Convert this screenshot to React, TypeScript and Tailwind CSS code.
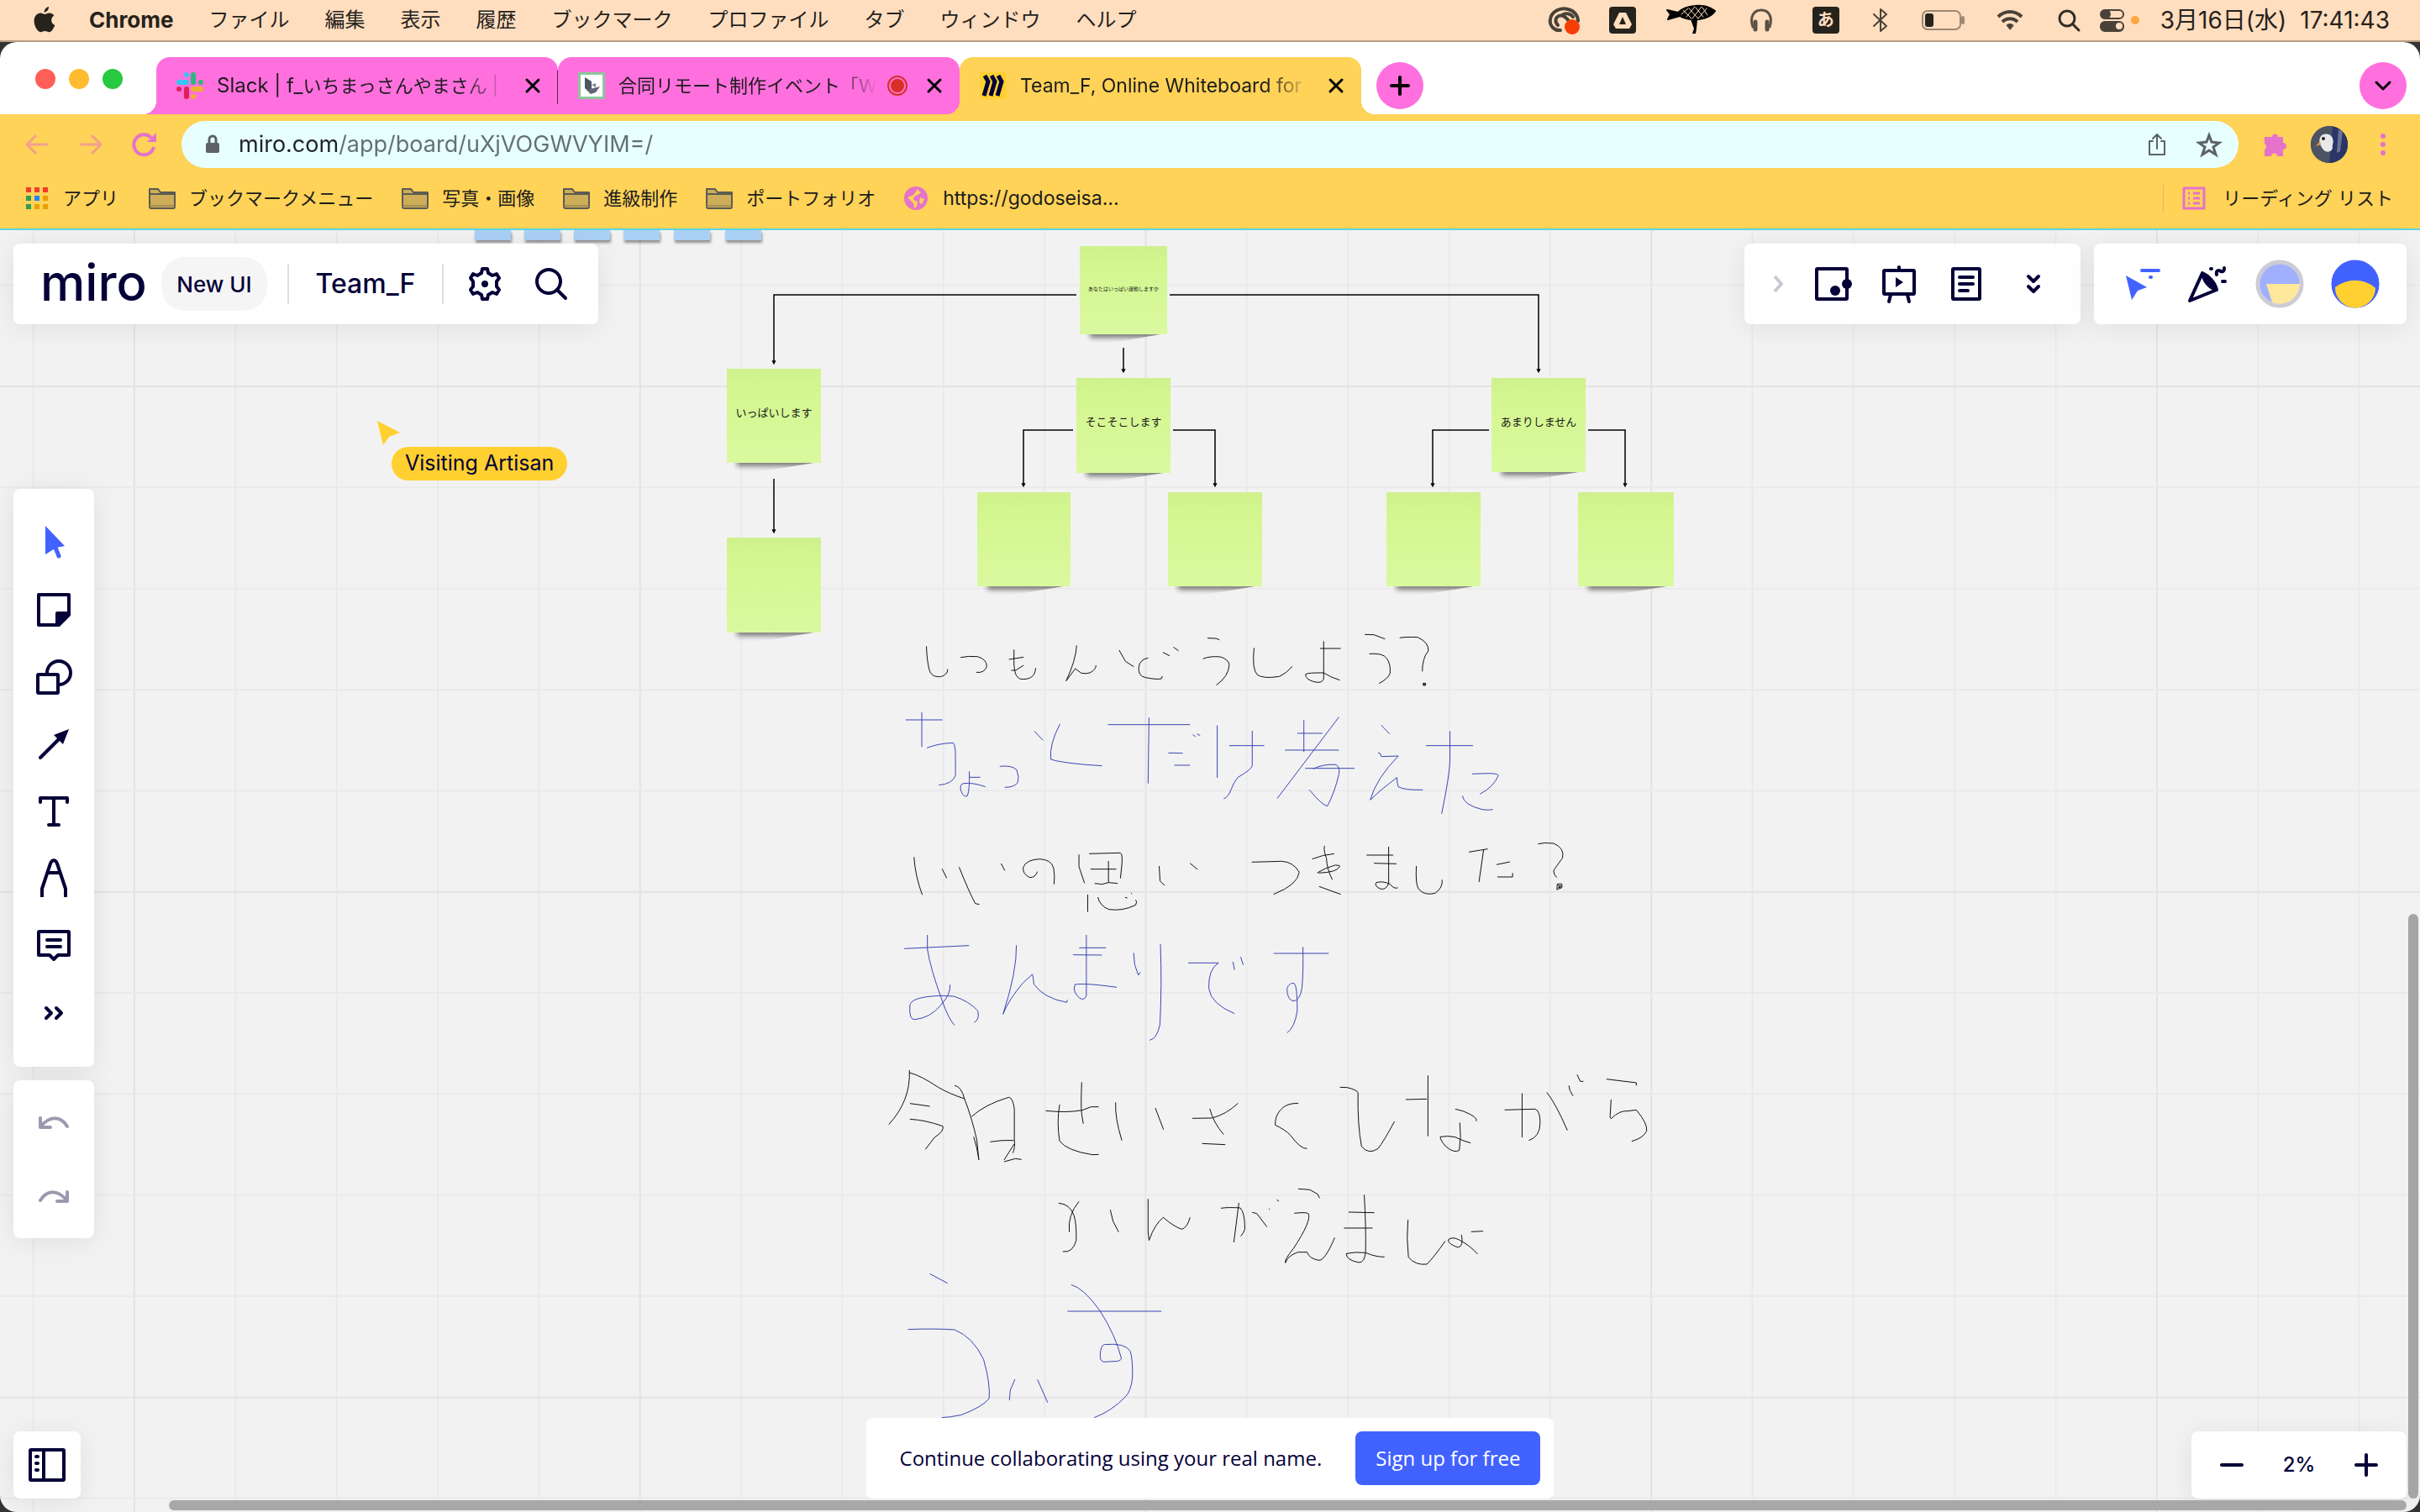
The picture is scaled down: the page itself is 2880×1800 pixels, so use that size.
import React from "react";

const NAVY = "#050038";

/* ---------- shared pieces ---------- */

type BtnProps = {
  label: string;
  className?: string;
  children: React.ReactNode;
};

function IconButton({ label, className = "", children }: BtnProps) {
  return (
    <button type="button" aria-label={label} className={`flex shrink-0 items-center justify-center ${className}`}>
      {children}
    </button>
  );
}

type SvgProps = {
  w: number;
  h: number;
  children: React.ReactNode;
  color?: string;
  sw?: number;
};

function Draw({ w, h, children, color = NAVY, sw = 4 }: SvgProps) {
  return (
    <svg
      width={w}
      height={h}
      viewBox={`0 0 ${w} ${h}`}
      fill="none"
      stroke={color}
      strokeWidth={sw}
      strokeLinecap="round"
      strokeLinejoin="round"
      aria-hidden="true"
      className="shrink-0 overflow-visible"
    >
      {children}
    </svg>
  );
}

/* ---------- macOS menu bar ---------- */

const menus = ["ファイル", "編集", "表示", "履歴", "ブックマーク", "プロファイル", "タブ", "ウィンドウ", "ヘルプ"];

function MenuBar() {
  return (
    <header className="flex h-[50px] shrink-0 items-center justify-between border-b-2 border-[#b99c83] bg-[#ffdebf] pr-9 pl-10 text-[#26221c]">
      <nav aria-label="メニューバー" className="flex items-center text-2xl">
        <IconButton label="Apple" className="mr-10">
          <Draw w={26} h={32} color="none">
            <path
              fill="#26221c"
              d="M18 0c.3 3-2.400 6.600-5.300 6.700C12.300 3.800 15 .6 18 0zM13.300 9c1.300 0 3-1.500 5.800-1.400 1.600.1 3.800.9 5.200 2.900-4.600 3-3.900 9.300 1 11.400-1 2.900-3.700 8.200-6.800 8.300-2 0-2.800-1.200-5.100-1.200s-3.200 1.200-5 1.200C4.700 30.200.6 22.900.6 17c0-6 3.800-9.300 7.600-9.400 2.200 0 3.900 1.400 5.100 1.400z"
            />
          </Draw>
        </IconButton>
        <button type="button" className="mr-[42px] text-[26px] font-bold">
          Chrome
        </button>
        <div className="flex gap-[42px]">
          {menus.map((m) => (
            <button key={m} type="button" className="whitespace-nowrap">
              {m}
            </button>
          ))}
        </div>
      </nav>

      <div className="flex items-center">
        <IconButton label="Creative Cloud" className="mr-8 w-11">
          <Draw w={42} h={34} color="#4a4238" sw={4}>
            <path d="M17 29a11 11 0 0 1-12-13C6 7 17 1 26 4c8 2 12 8 12 14" />
            <path d="M14 23c-4-4-3-9 1-11 5-2 9 2 12 6M19 11c4-3 10-2 13 2" />
            <circle cx="31" cy="25" r="9" fill="#f73d06" stroke="none" />
          </Draw>
        </IconButton>
        <IconButton label="Drive" className="mr-9 h-8 w-8 rounded-sm bg-[#26221c]">
          <Draw w={24} h={24} color="none">
            <path d="M8 3h8l7 14-3 5H4l-3-5z" fill="#ffdebf" />
            <path d="M12 8l4 9H8z" fill="#26221c" />
          </Draw>
        </IconButton>
        <IconButton label="Fish" className="mr-10 w-[60px]">
          <Draw w={60} h={34} color="#000000" sw={2}>
            <path d="M14 8C22-1 46-4 58 6 52 16 30 20 16 12L2 16l3-6-4-5z" fill="#000000" />
            <path
              d="M18 10l8-7M24 13l10-12M31 15L42 1M38 15L48 3M20 5l10 10M27 3l11 12M35 2l9 11M43 2l6 9"
              stroke="#ffdebf"
              strokeWidth="1"
            />
            <path d="M29 16h8l-1 11-1 6h-4l2-6z" fill="#000000" stroke="none" />
          </Draw>
        </IconButton>
        <IconButton label="Headphones" className="mr-12">
          <Draw w={26} h={28} color="#5a5045" sw={3}>
            <path d="M3 22C-1 10 4 2 13 2s14 8 10 20" />
            <path d="M6 16v9M20 16v9" strokeWidth="5" />
          </Draw>
        </IconButton>
        <IconButton label="入力ソース" className="mr-10 h-8 w-8 rounded-sm bg-[#26221c] text-xl leading-8 font-bold text-[#ffdebf]">
          あ
        </IconButton>
        <IconButton label="Bluetooth" className="mr-10">
          <Draw w={18} h={28} color="#4a4238" sw={2}>
            <path d="M1 7l15 14-7 6V1l7 6L1 21" />
          </Draw>
        </IconButton>
        <IconButton label="バッテリー" className="mr-9">
          <Draw w={52} h={24} color="#9c8874" sw={2}>
            <rect x="1" y="1" width="45" height="22" rx="6" />
            <rect x="4" y="4" width="10" height="16" rx="3" fill="#26221c" stroke="none" />
            <path d="M49 9v6" strokeWidth="4" />
          </Draw>
        </IconButton>
        <IconButton label="Wi-Fi" className="mr-10">
          <Draw w={34} h={26} color="#4a4238" sw={4}>
            <path d="M3 9c8-8 20-8 28 0M8 15c5-5 13-5 18 0" strokeLinecap="butt" />
            <path d="M17 24l-4-5c2-2 6-2 8 0z" fill="#4a4238" strokeWidth="1" />
          </Draw>
        </IconButton>
        <IconButton label="検索" className="mr-6">
          <Draw w={26} h={26} color="#332d26" sw={3}>
            <circle cx="11" cy="11" r="9" />
            <path d="M18 18l7 7" />
          </Draw>
        </IconButton>
        <IconButton label="コントロールセンター" className="mr-7">
          <Draw w={44} h={28} color="#4a4238" sw={2}>
            <rect x="1" y="2" width="27" height="10" rx="5" />
            <circle cx="7" cy="7" r="5" fill="#4a4238" />
            <rect x="1" y="16" width="27" height="11" rx="5" fill="#4a4238" />
            <circle cx="23" cy="21" r="4" fill="#ffdebf" stroke="none" />
            <circle cx="42" cy="14" r="5" fill="#ffa640" stroke="none" />
          </Draw>
        </IconButton>
        <time className="flex gap-4 text-[28px] whitespace-nowrap">
          <span>3月16日(水)</span>
          <span>17:41:43</span>
        </time>
      </div>
    </header>
  );
}

/* ---------- browser chrome ---------- */

function SlackIcon() {
  return (
    <Draw w={32} h={32} color="none">
      <rect x="9" y="0" width="6" height="6" rx="3" fill="#36c5f0" />
      <rect x="0" y="9" width="15" height="6" rx="3" fill="#36c5f0" />
      <rect x="17" y="0" width="6" height="15" rx="3" fill="#2eb67d" />
      <rect x="26" y="9" width="6" height="6" rx="3" fill="#2eb67d" />
      <rect x="17" y="17" width="15" height="6" rx="3" fill="#ecb22e" />
      <rect x="17" y="26" width="6" height="6" rx="3" fill="#ecb22e" />
      <rect x="0" y="17" width="6" height="6" rx="3" fill="#e01e5a" />
      <rect x="9" y="17" width="6" height="15" rx="3" fill="#e01e5a" />
    </Draw>
  );
}

function EventIcon() {
  return (
    <Draw w={32} h={32} color="none">
      <rect width="32" height="32" fill="#8cc79a" />
      <rect x="3" y="3" width="26" height="26" fill="#ffffff" />
      <path d="M8 6l8 5v9l-3 3-5-4z" fill="#4c5661" />
      <path d="M16 15l5-2v5z" fill="#7b858f" />
      <path d="M10 21l16-4-5 7-6 2z" fill="#5d6771" />
    </Draw>
  );
}

function MiroIcon() {
  return (
    <Draw w={32} h={32} color={NAVY} sw={5}>
      <rect width="32" height="32" rx="4" fill="#ffd02f" stroke="none" />
      <path d="M6 4l4 7-5 17M14 4l4 7-5 17M22 4l4 7-5 17" strokeLinecap="butt" strokeLinejoin="miter" />
    </Draw>
  );
}

type TabProps = {
  title: React.ReactNode;
  icon: React.ReactNode;
  className: string;
  recording?: boolean;
};

function Tab({ title, icon, className, recording }: TabProps) {
  return (
    <div className={`relative flex h-[68px] w-[478px] items-center rounded-t-2xl pr-[14px] pl-6 text-[22px] ${className}`}>
      {icon}
      <button
        type="button"
        role="tab"
        className="ml-4 min-w-0 flex-1 overflow-hidden text-left whitespace-nowrap [mask-image:linear-gradient(90deg,#000_85%,transparent)]"
      >
        {title}
      </button>
      {recording && (
        <span className="ml-3 flex">
          <Draw w={24} h={24} color="#d93025" sw={2}>
            <circle cx="12" cy="12" r="11" />
            <circle cx="12" cy="12" r="7" fill="#d93025" />
          </Draw>
        </span>
      )}
      <IconButton label="タブを閉じる" className="ml-4 h-8 w-8">
        <Draw w={16} h={16} color="#000000" sw={3}>
          <path d="M1 1l14 14M15 1L1 15" />
        </Draw>
      </IconButton>
    </div>
  );
}

function TabStrip() {
  return (
    <div className="flex h-[86px] items-end justify-between bg-white">
      <div className="flex items-end">
        <div className="flex h-[84px] w-[186px] items-center gap-4 pl-[42px]">
          <button type="button" aria-label="閉じる" className="h-6 w-6 rounded-full bg-[#ff5f57]" />
          <button type="button" aria-label="しまう" className="h-6 w-6 rounded-full bg-[#febc2e]" />
          <button type="button" aria-label="拡大" className="h-6 w-6 rounded-full bg-[#28c840]" />
        </div>
        <div role="tablist" className="flex">
          <Tab
            title={
              <>
                <span className="text-2xl">Slack | f_</span>いちまっさんやまさん |
              </>
            }
            icon={<SlackIcon />}
            className="bg-[#ff70de] before:absolute before:right-full before:bottom-0 before:h-4 before:w-4 before:bg-[radial-gradient(circle_at_0_0,transparent_16px,#ff70de_16px)] after:absolute after:right-0 after:bottom-3 after:h-10 after:w-px after:bg-[#5a2a50]"
          />
          <Tab title="合同リモート制作イベント「W" icon={<EventIcon />} className="bg-[#ff70de]" recording />
          <Tab
            title={<span className="text-[23px]">Team_F, Online Whiteboard for</span>}
            icon={<MiroIcon />}
            className="bg-[#ffd258] before:absolute before:right-full before:bottom-0 before:h-4 before:w-4 before:bg-[radial-gradient(circle_at_0_0,transparent_16px,#ffd258_16px)] after:absolute after:bottom-0 after:left-full after:h-4 after:w-4 after:bg-[radial-gradient(circle_at_100%_0,transparent_16px,#ffd258_16px)]"
          />
        </div>
        <IconButton label="新しいタブ" className="mb-[6px] ml-[18px] h-14 w-14 rounded-full bg-[#ff70de]">
          <Draw w={24} h={24} color="#000000" sw={4}>
            <path d="M12 2v20M2 12h20" />
          </Draw>
        </IconButton>
      </div>
      <IconButton label="タブを検索" className="mr-4 mb-[6px] h-14 w-14 rounded-full bg-[#ff70de]">
        <Draw w={18} h={10} color="#000000" sw={3}>
          <path d="M1 1l8 8 8-8" />
        </Draw>
      </IconButton>
    </div>
  );
}

function Toolbar() {
  return (
    <div className="flex h-[72px] items-center pr-[26px] pl-[30px]">
      <IconButton label="戻る" className="mr-9">
        <Draw w={28} h={26} color="#f2a08c" sw={3}>
          <path d="M27 13H2M13 2L2 13l11 11" strokeLinecap="butt" />
        </Draw>
      </IconButton>
      <IconButton label="進む" className="mr-9">
        <Draw w={28} h={26} color="#f2a08c" sw={3}>
          <path d="M1 13h25M15 2l11 11-11 11" strokeLinecap="butt" />
        </Draw>
      </IconButton>
      <IconButton label="再読み込み">
        <Draw w={28} h={28} color="#e572cb" sw={4}>
          <path d="M25 17A12 12 0 1 1 22 6" strokeLinecap="butt" />
          <path d="M28 0v11H17z" fill="#e572cb" stroke="none" />
        </Draw>
      </IconButton>
      <div className="ml-[30px] flex h-14 min-w-0 flex-1 items-center rounded-full bg-[#e7ffff] pr-5 pl-7">
        <Draw w={18} h={22} color="#5c6366" sw={3}>
          <rect x="1" y="9" width="16" height="12" rx="2" fill="#5c6366" stroke="none" />
          <path d="M5 10V5a4 4 0 0 1 8 0v5" />
        </Draw>
        <input
          aria-label="アドレス"
          defaultValue="miro.com/app/board/uXjVOGWVYIM=/"
          className="ml-[22px] min-w-0 flex-1 bg-[linear-gradient(90deg,#202124_120px,#646e71_120px)] bg-clip-text text-[27px] text-transparent outline-none"
        />
        <IconButton label="共有" className="mr-9">
          <Draw w={22} h={28} color="#5c6366" sw={2}>
            <path d="M6 10H2v16h18V10h-4M11 19V2M6 7l5-5 5 5" />
          </Draw>
        </IconButton>
        <IconButton label="ブックマークに追加">
          <Draw w={30} h={28} color="#5c6366" sw={3}>
            <path d="M15 3l3 8 9 1-7 5 3 9-8-5-8 5 3-9-7-5 9-1z" strokeLinejoin="miter" />
          </Draw>
        </IconButton>
      </div>
      <IconButton label="拡張機能" className="ml-[30px]">
        <Draw w={28} h={28} color="none">
          <path
            d="M10 5a3.500 3.500 0 0 1 7 0h6v7a4 4 0 0 1 0 8v8h-7a3.500 3.500 0 0 0-7 0H1v-8a4 4 0 0 0 0-7V5z"
            fill="#e572cb"
          />
        </Draw>
      </IconButton>
      <IconButton label="プロフィール" className="ml-7 h-11 w-11 overflow-hidden rounded-full bg-[#3d4450]">
        <Draw w={44} h={44} color="none">
          <rect width="44" height="44" fill="#4c5463" />
          <path d="M26 0h18v44H22z" fill="#2c3468" />
          <path d="M33 4l5 2-3 24-4 2z" fill="#6b7394" />
          <path d="M11 14c2-6 13-6 15 1 2 5-1 7 0 11-1 6-9 6-12 1-2-4-5-7-3-13z" fill="#e8e8ea" />
          <path d="M11 18l-5 6 6-2z" fill="#e89a3c" />
          <circle cx="15" cy="15" r="2" fill="#222222" />
        </Draw>
      </IconButton>
      <IconButton label="メニュー" className="ml-6 w-9">
        <Draw w={6} h={26} color="none">
          <circle cx="3" cy="3" r="3" fill="#e572cb" />
          <circle cx="3" cy="13" r="3" fill="#e572cb" />
          <circle cx="3" cy="23" r="3" fill="#e572cb" />
        </Draw>
      </IconButton>
    </div>
  );
}

function FolderIcon() {
  return (
    <Draw w={32} h={26} color="#5c5a52" sw={2}>
      <path d="M1 23V2h10l3 4h17v17a2 2 0 0 1-2 2H3a2 2 0 0 1-2-2z" fill="#cdad58" />
      <path d="M1 8h30" />
      <path d="M2 22h28" stroke="#a58e50" />
    </Draw>
  );
}

function AppsIcon() {
  const colors = ["#f23b2f", "#f23b2f", "#f23b2f", "#2f9e51", "#2383f5", "#eb9f00", "#2f9e51", "#eb9f00", "#eb9f00"];
  return (
    <Draw w={26} h={26} color="none">
      {colors.map((c, i) => (
        <rect key={i} x={(i % 3) * 10} y={Math.floor(i / 3) * 10} width="6" height="6" fill={c} />
      ))}
    </Draw>
  );
}

function GlobeIcon() {
  return (
    <Draw w={28} h={28} color="none">
      <circle cx="14" cy="14" r="14" fill="#e572cb" />
      <path d="M16 3l4 5-8 4-1 4 5 2-1 6-3 2-1-6-7-7 7-3 3-4z" fill="#ffd258" />
      <path d="M19 13l5 2-3 6-3-2z" fill="#ffd258" />
    </Draw>
  );
}

function BookmarkBar() {
  const folders = ["ブックマークメニュー", "写真・画像", "進級制作", "ポートフォリオ"];
  return (
    <nav aria-label="ブックマーク" className="flex h-14 items-center pr-8 pl-[31px] text-[22px] whitespace-nowrap">
      <a href="#apps" className="mr-9 flex items-center gap-[18px]">
        <AppsIcon />
        アプリ
      </a>
      {folders.map((f) => (
        <a key={f} href="#folder" className="mr-[34px] flex items-center gap-4">
          <FolderIcon />
          {f}
        </a>
      ))}
      <a href="#site" className="flex items-center gap-[18px]">
        <GlobeIcon />
        <span className="text-[23px]">https://godoseisa...</span>
      </a>
      <a href="#reading-list" className="ml-auto flex items-center gap-5 border-l border-[#eeb06c] pl-[22px]">
        <Draw w={28} h={28} color="#e572cb" sw={3}>
          <rect x="2" y="2" width="24" height="24" />
          <path d="M7 8h2M13 8h8M7 14h2M13 14h8M7 20h2M13 20h8" strokeLinecap="butt" />
        </Draw>
        リーディング リスト
      </a>
    </nav>
  );
}

/* ---------- board drawing ---------- */

const STEP = 120.35;
const columns = Array.from({ length: 24 }, (_, i) => ({ pos: 39.6 + i * STEP, major: i % 5 === 1 }));
const rows = Array.from({ length: 13 }, (_, i) => ({ pos: 339.6 + i * STEP, major: i % 5 === 1 }));

const connectors = [
  "M1281 351H921V430",
  "M1392 351H1831V440",
  "M1337 414V440",
  "M921 570V631",
  "M1277 512H1218V576",
  "M1396 512H1446V576",
  "M1772 512H1705V576",
  "M1890 512H1934V576",
];

const BLUE = "#3a46b4";
const INK = "#111111";

/* Pen strokes, one sheet per part of the board. */
const sheets = [
  {
    transform: "translate(1040 740) scale(0.54845 0.33333)",
    strokes: [
      {
        color: INK,
        d: [
          "M114 88C115 130 118 165 122 180C128 200 145 200 152 192Q160 185 160 170",
          "M188 128Q205 122 225 125Q245 135 245 160Q240 185 222 181",
          "M304 100V150C305 180 308 200 318 205C335 208 350 200 351 166M293 135L325 127M298 174L308 174L325 156",
          "M440 85Q438 140 417 212L437 168L450 184Q462 188 470 182Q482 170 482 156",
          "M532 102L546 142L564 161M595 130Q578 135 575 160Q572 195 590 200Q615 208 624 204L626 195M627 110L642 122M650 91L661 104",
          "M724 59L742 60L750 65M714 133Q730 122 752 126Q770 135 771 155Q770 195 743 227",
          "M825 94Q820 170 832 190Q845 205 880 196Q895 185 908 160",
          "M976 70V205Q972 222 955 215Q935 205 937 188Q942 182 976 183Q992 200 1011 209M968 96H1013",
          "M1065 46L1085 47L1109 62M1075 115Q1105 112 1112 130Q1122 150 1120 185Q1115 205 1096 221",
          "M1141 58Q1155 54 1180 56Q1205 75 1203 105Q1190 130 1190 178M1192 220H1197V228H1192ZM1192 224H1197",
          "M87 841Q90 910 105 976M148 883L158 916M185 877Q205 960 220 1007L229 1010M276 864L284 889",
          "M355 893Q350 915 338 914Q322 900 324 878Q330 850 360 848Q385 850 390 880Q393 910 391 938",
          "M445 832V875L457 934M467 829L535 826Q540 830 538 870L535 917M509 855V932M470 884H526M479 935L495 938L509 932L529 935",
          "M464 975V1037M486 984Q490 1015 510 1028Q540 1035 568 1012Q572 1000 568 994M545 985L550 987M558 969L560 972",
          "M619 873L621 927L631 942M686 863L702 885",
          "M820 859L885 856Q910 858 923 895Q920 940 867 974",
          "M951 848Q975 832 999 829M978 801Q975 815 982 845Q983 885 995 922M962 897Q980 880 1000 870Q1015 870 1010 876Q1005 895 965 898M966 946L1013 974",
          "M1117 804V935Q1112 958 1100 955Q1085 945 1090 932Q1105 925 1120 938Q1128 955 1137 951M1069 834H1127M1085 863L1134 865",
          "M1177 873Q1175 940 1182 955Q1195 980 1218 970Q1235 950 1233 922",
          "M1291 823L1332 812M1323 815L1313 930M1351 868L1380 858M1353 912H1386V898",
          "M1441 794Q1455 788 1475 792Q1500 810 1494 845Q1478 880 1475 890Q1475 905 1482 914M1483 937H1493V950L1482 957ZM1484 942L1491 944L1485 950L1491 948",
        ],
      },
      {
        color: BLUE,
        d: [
          "M69 351H149M104 324V448M115 451Q140 435 172 433Q177 440 177 480V550Q170 580 141 584",
          "M207 535Q208 600 203 622Q195 630 189 605Q185 580 195 578Q215 574 242 590M208 556H231",
          "M273 517Q300 512 310 530Q316 555 312 575Q305 592 284 592",
          "M348 391L367 424M404 365Q380 440 384 492Q400 502 460 511L495 515",
          "M508 368H686M597 343L595 578M639 469L670 470M652 513H686M692 404L698 411M701 401L708 407",
          "M745 371V558M771 443H847M821 390V515Q818 530 790 556Q782 570 775 600Q768 630 759 632",
          "M933 352V466M919 399H973M892 459H1009M1009 341L875 632M936 524H1043M953 526Q975 508 1003 511Q1012 520 1009 545Q1000 610 984 659Q972 655 945 601",
          "M1101 370L1119 401M1094 469L1099 471L1101 482L1138 480Q1090 560 1077 637Q1100 600 1135 557Q1135 580 1138 590Q1150 602 1191 601",
          "M1198 443H1300M1250 391V500Q1248 560 1232 686M1298 544L1335 542Q1356 543 1355 550Q1345 590 1315 616M1277 622Q1280 655 1320 671Q1335 675 1343 671",
        ],
      },
    ],
  },
  {
    transform: "translate(1040 1080) scale(0.61224 0.33333)",
    strokes: [
      {
        color: BLUE,
        d: [
          "M59 148L185 137M104 99V150Q110 220 132 330Q145 400 157 422M148 277Q150 310 130 350Q110 395 80 401Q68 405 70 350Q72 320 130 316L155 318Q185 335 202 370Q206 400 195 412",
          "M277 136Q278 230 251 382Q262 330 290 270L308 240Q310 250 311 275Q330 325 375 340L376 331",
          "M413 99V315Q410 335 400 325Q385 300 391 276Q410 270 472 286M399 145H451M387 170L443 171",
          "M505 163L507 205L514 243L518 232M557 132Q560 280 556 420Q550 470 536 475",
          "M611 199H670Q650 220 651 290Q655 345 701 380M698 195L701 224M713 178L718 206",
          "M777 165H884M834 142Q835 230 832 290Q828 335 815 335Q803 330 803 290Q808 268 817 272Q823 280 823 370Q818 430 803 449",
        ],
      },
      {
        color: INK,
        d: [
          "M69 582Q72 690 29 776M69 591Q90 600 125 643Q145 665 176 684M70 701L109 711M70 757Q100 760 134 782Q137 800 118 822L100 865",
          "M157 637Q170 640 176 684Q190 750 200 830L204 902L200 860L194 820M190 748Q215 705 262 679Q270 680 273 720V830Q275 860 270 878M273 845L253 903M226 838L250 833H272M253 909L275 898L287 901",
          "M334 727Q375 735 405 725L422 713H437M404 625Q402 710 404 740L407 773M361 705Q355 770 361 835Q375 870 425 884L437 883",
          "M470 697Q468 750 482 833M547 717L563 794",
          "M619 754L657 753Q685 740 708 700M653 720Q660 770 680 812M638 844L683 848",
          "M825 700Q800 700 790 725Q780 745 780 778Q800 795 810 815Q830 865 842 862",
          "M906 643L920 644Q938 652 941 662Q940 780 948 855Q962 885 980 862Q990 840 1012 765",
          "M1034 687L1075 685M1077 601V818M1130 721L1145 728Q1175 750 1171 764M1139 769Q1142 820 1138 868Q1128 880 1112 855Q1100 830 1101 820Q1115 815 1130 821Q1145 835 1160 842",
          "M1226 724L1285 721Q1295 725 1295 770Q1295 820 1273 833M1260 665V822M1308 661Q1325 700 1348 797M1351 637L1353 655L1359 674M1367 598L1373 622L1379 622",
          "M1424 614L1482 627V637M1433 687L1431 750L1433 755Q1450 725 1465 728L1482 724Q1505 775 1502 800Q1495 825 1473 836",
        ],
      },
    ],
  },
  {
    transform: "translate(1040 1380) scale(0.54845 0.33333)",
    strokes: [
      {
        color: INK,
        d: [
          "M401 157Q425 160 434 200Q440 230 439 290Q432 335 410 330M445 151Q420 200 424 260M513 181L519 222L531 260",
          "M595 142V260L597 290Q610 230 628 208Q650 240 668 250Q680 245 686 208",
          "M753 175Q770 171 795 174Q805 190 805 250Q802 265 796 275M792 156L781 297M821 190L831 194L853 242M857 177L859 179M875 144L878 151",
          "M921 106L946 109L963 125L967 139M912 193Q940 188 943 195Q950 220 910 320Q890 360 893 370Q898 345 920 332H940Q945 355 965 361Q978 365 1000 280",
          "M1030 189L1086 191M1020 246H1082M1064 127Q1068 240 1067 330Q1065 370 1052 369Q1025 360 1025 337Q1045 330 1067 334Q1090 350 1108 349",
          "M1159 216Q1155 280 1160 350Q1175 380 1200 375Q1215 350 1240 292M1275 270Q1280 310 1268 315Q1247 305 1246 288Q1255 275 1270 288Q1295 310 1310 339M1296 259L1322 257",
        ],
      },
      {
        color: BLUE,
        d: [
          "M121 409L160 443M74 608Q130 604 175 609Q215 635 238 715Q253 800 250 855Q235 885 190 913Q165 922 147 923",
          "M306 786L296 825L294 861M355 787L377 869",
          "M420 543H624M428 448Q455 460 490 540Q525 630 537 712Q535 722 522 722L498 724Q490 718 491 700Q492 665 500 662Q545 655 556 685Q562 710 561 780Q558 830 545 850Q515 900 478 923",
        ],
      },
    ],
  },
];

function BoardDrawing() {
  return (
    <svg className="absolute inset-0 h-full w-full" fill="none" role="img" aria-label="手書きメモ">
      <defs>
        <marker id="tip" viewBox="0 0 6 7" refX="1" refY="3" markerWidth="7" markerHeight="6" markerUnits="userSpaceOnUse" orient="auto">
          <path d="M0 0l6 3-6 3z" fill="#000000" />
        </marker>
      </defs>
      <g transform="translate(0 -274)">
        {columns.map((c) => (
          <path key={c.pos} d={`M${c.pos} 274V1800`} stroke={c.major ? "#e3e3e3" : "#eaeaea"} strokeWidth="2" />
        ))}
        {rows.map((r) => (
          <path key={r.pos} d={`M0 ${r.pos}H2880`} stroke={r.major ? "#e3e3e3" : "#eaeaea"} strokeWidth="2" />
        ))}
        {connectors.map((d) => (
          <path key={d} d={d} stroke="#000000" strokeWidth="1.500" markerEnd="url(#tip)" />
        ))}
        {sheets.map((s) => (
          <g key={s.transform} transform={s.transform}>
            {s.strokes.map((st) =>
              st.d.map((d) => (
                <path key={d} d={d} stroke={st.color} strokeWidth="1" vectorEffect="non-scaling-stroke" />
              )),
            )}
          </g>
        ))}
        <path d="M449 501L476 515L463 520L456 530Z" fill="#ffd02f" />
      </g>
    </svg>
  );
}

const notes = [
  { place: "top-[19px] left-[1285px] h-[105px] w-[104px]", text: "あなたはいっぱい運動しますか", size: "text-[6px] pb-1" },
  { place: "top-[165px] left-[865px] h-[112px] w-[112px]", text: "いっぱいします", size: "text-[13px] pb-2" },
  { place: "top-[176px] left-[1281px] h-[113px] w-[112px]", text: "そこそこします", size: "text-[13px] pb-2" },
  { place: "top-[176px] left-[1775px] h-[112px] w-[112px]", text: "あまりしません", size: "text-[13px] pb-2" },
  { place: "top-[366px] left-[865px] h-[113px] w-[112px]", text: "", size: "" },
  { place: "top-[312px] left-[1163px] h-[112px] w-[111px]", text: "", size: "" },
  { place: "top-[312px] left-[1390px] h-[112px] w-[112px]", text: "", size: "" },
  { place: "top-[312px] left-[1650px] h-[112px] w-[112px]", text: "", size: "" },
  { place: "top-[312px] left-[1878px] h-[112px] w-[114px]", text: "", size: "" },
];

const blueNotes = ["left-[565px]", "left-[624px]", "left-[683px]", "left-[742px]", "left-[802px]", "left-[863px]"];

function Note({ place, text, size }: { place: string; text: string; size: string }) {
  return (
    <div className={`absolute ${place}`}>
      <div className="absolute right-2 -bottom-1 left-3 h-3 bg-black/50 blur-[3px] [clip-path:polygon(-5%_-50%,105%_-50%,105%_60%,10%_180%,-5%_120%)]" />
      <div
        className={`relative flex h-full w-full items-center justify-center bg-linear-to-b from-[#cff18d] via-[#d4f68f] via-20% to-[#daf99f] leading-none whitespace-nowrap text-[#1a1a1a] ${size}`}
      >
        {text}
      </div>
    </div>
  );
}

/* ---------- board panels ---------- */

const panel = "rounded-lg bg-white shadow-[0_4px_32px_rgba(5,0,56,0.08)]";

function TitlePanel() {
  return (
    <div className={`flex h-24 items-center pr-[37px] pl-8 text-[#050038] ${panel}`}>
      <a href="#home" className="w-32 pb-1 text-[60px] leading-none font-medium">
        miro
      </a>
      <button type="button" className="ml-4 flex h-16 w-[126px] items-center justify-center rounded-[28px] bg-[#f5f5f6] text-[26px] font-medium">
        New UI
      </button>
      <span className="ml-6 h-12 w-[2px] bg-[#dfdfe5]" />
      <button type="button" className="w-[182px] text-[32px] font-medium">
        Team_F
      </button>
      <span className="h-12 w-[2px] bg-[#dfdfe5]" />
      <IconButton label="設定" className="ml-[29px]">
        <Draw w={40} h={40}>
          <path d="M16 7L17 2h6l1 5 5 3 5-2 3 5-3 4v6l3 4-3 5-5-2-5 3-1 5h-6l-1-5-5-3-5 2-3-5 3-4v-6l-3-4 3-5 5 2z" />
          <circle cx="20" cy="20" r="4" fill={NAVY} stroke="none" />
        </Draw>
      </IconButton>
      <IconButton label="検索" className="ml-10">
        <Draw w={38} h={38}>
          <circle cx="16" cy="16" r="14" />
          <path d="M26 26l10 10" />
        </Draw>
      </IconButton>
    </div>
  );
}

function PresentPanel() {
  return (
    <div className={`flex h-24 items-center pr-12 pl-[34px] ${panel}`}>
      <IconButton label="展開">
        <Draw w={12} h={20} color="#c9c8d3">
          <path d="M2 1l8 9-8 9" strokeLinecap="butt" />
        </Draw>
      </IconButton>
      <IconButton label="フレーム" className="ml-[38px]">
        <Draw w={44} h={40}>
          <rect x="2" y="2" width="36" height="36" rx="1" />
          <circle cx="38" cy="20" r="6" fill={NAVY} stroke="none" />
          <circle cx="24" cy="28" r="6" fill={NAVY} stroke="none" />
        </Draw>
      </IconButton>
      <IconButton label="プレゼンテーション" className="ml-9">
        <Draw w={40} h={44}>
          <rect x="2" y="6" width="36" height="28" rx="1" />
          <path d="M20 6V2M10 35l-2 8M30 35l2 8" />
          <path d="M16 14l9 6-9 6z" fill={NAVY} stroke="none" />
        </Draw>
      </IconButton>
      <IconButton label="ノート" className="ml-[42px]">
        <Draw w={36} h={40}>
          <rect x="2" y="2" width="32" height="36" rx="1" />
          <path d="M10 12h16M10 20h16M10 28h10" />
        </Draw>
      </IconButton>
      <IconButton label="その他" className="ml-[54px]">
        <Draw w={16} h={22}>
          <path d="M2 2l6 6 6-6M2 14l6 6 6-6" />
        </Draw>
      </IconButton>
    </div>
  );
}

function PeoplePanel() {
  return (
    <div className={`flex h-24 items-center pr-8 pl-[38px] ${panel}`}>
      <IconButton label="カーソル表示">
        <Draw w={42} h={40} color="#4262ff">
          <path d="M0 10l25 14-11 4-7 11z" fill="#4262ff" stroke="none" />
          <path d="M19 4h20M29 12h1" />
        </Draw>
      </IconButton>
      <IconButton label="リアクション" className="ml-8">
        <Draw w={48} h={44}>
          <path d="M17 9L2 42l32-13zM17 9c2 10 8 17 17 20M17 9c7 3 15 11 17 20" />
          <path d="M27 4h1M41 19h3M34 11c-1-5 2-6 5-4 3 1 4-1 4-4" />
        </Draw>
      </IconButton>
      <IconButton label="参加者" className="ml-8">
        <Draw w={58} h={58} sw={5} color="#cdcbd7">
          <circle cx="29" cy="29" r="26" fill="#a0b0ff" />
          <path d="M13 29h40a24 24 0 0 1-33 22z" fill="#ffe79b" stroke="none" />
        </Draw>
      </IconButton>
      <IconButton label="自分" className="ml-8">
        <Draw w={58} h={58} sw={5} color="#4262ff">
          <circle cx="29" cy="29" r="26" fill="#4262ff" />
          <path d="M5 33c14-11 34-11 48 1a24 24 0 0 1-48-1z" fill="#ffd02f" stroke="none" />
        </Draw>
      </IconButton>
    </div>
  );
}

const tools = [
  {
    label: "選択",
    art: (
      <Draw w={20} h={40} color="#4262ff" sw={5}>
        <path d="M0 0l23 24-10 2-13 8z" fill="#4262ff" stroke="none" />
        <path d="M12 26l4 10" />
      </Draw>
    ),
  },
  {
    label: "付箋",
    art: (
      <Draw w={40} h={40}>
        <path d="M2 2h36v24L26 38H2z" />
        <path d="M24 38V24h14z" fill={NAVY} />
      </Draw>
    ),
  },
  {
    label: "図形",
    art: (
      <Draw w={44} h={42}>
        <rect x="3" y="18" width="24" height="22" rx="1" />
        <path d="M14 16a14 14 0 1 1 14 14" />
      </Draw>
    ),
  },
  {
    label: "線",
    art: (
      <Draw w={36} h={36}>
        <path d="M2 34L24 12" />
        <path d="M36 0L18 7l11 11z" fill={NAVY} stroke="none" />
      </Draw>
    ),
  },
  {
    label: "テキスト",
    art: (
      <Draw w={36} h={36}>
        <path d="M2 7V2h32v5M18 2v32M12 34h12" />
      </Draw>
    ),
  },
  {
    label: "ペン",
    art: (
      <Draw w={32} h={48}>
        <path d="M2 46V36L12 6c2-5 6-5 8 0l10 30v10M9 17h14" strokeLinecap="butt" />
      </Draw>
    ),
  },
  {
    label: "コメント",
    art: (
      <Draw w={40} h={38}>
        <path d="M3 2h34a1 1 0 0 1 1 1v27H25l-5 5-5-5H2V3a1 1 0 0 1 1-1z" />
        <path d="M12 12h16M12 20h16" />
      </Draw>
    ),
  },
  {
    label: "その他のツール",
    art: (
      <Draw w={22} h={16}>
        <path d="M2 2l6 6-6 6M14 2l6 6-6 6" />
      </Draw>
    ),
  },
];

function SideTools() {
  return (
    <div className="flex flex-col gap-4">
      <div className={`flex w-24 flex-col py-6 ${panel}`}>
        {tools.map((t) => (
          <IconButton key={t.label} label={t.label} className="h-20">
            {t.art}
          </IconButton>
        ))}
      </div>
      <div className={`flex w-24 flex-col py-[6px] ${panel}`}>
        <IconButton label="元に戻す" className="h-[88px]">
          <Draw w={36} h={16} color="#9b99af">
            <path d="M2 3v11h12M2 14C12 0 26 0 34 13" />
          </Draw>
        </IconButton>
        <IconButton label="やり直す" className="h-[88px]">
          <Draw w={36} h={16} color="#9b99af">
            <path d="M34 3v11H22M34 14C24 0 10 0 2 13" />
          </Draw>
        </IconButton>
      </div>
    </div>
  );
}

function BottomRow() {
  return (
    <div className="grid grid-cols-[1fr_auto_1fr] items-end">
      <IconButton label="フレーム一覧" className={`h-20 w-20 ${panel}`}>
        <Draw w={44} h={40}>
          <rect x="2" y="2" width="40" height="36" rx="1" />
          <path d="M18 2v36M9 10h2M9 18h2M9 26h2" />
        </Draw>
      </IconButton>
      <div className="flex h-24 items-center rounded-lg bg-white pr-4 pl-10 font-['Open_Sans',sans-serif] text-2xl text-[#050038]">
        <p className="mr-10 whitespace-nowrap">Continue collaborating using your real name.</p>
        <button type="button" className="h-16 rounded-lg bg-[#4262ff] px-6 whitespace-nowrap text-white">
          Sign up for free
        </button>
      </div>
      <div className={`flex h-20 w-64 items-center justify-between justify-self-end px-[34px] text-2xl font-medium text-[#050038] ${panel}`}>
        <IconButton label="縮小">
          <Draw w={28} h={28}>
            <path d="M2 14h24" />
          </Draw>
        </IconButton>
        <button type="button">2%</button>
        <IconButton label="拡大">
          <Draw w={28} h={28}>
            <path d="M2 14h24M14 2v24" />
          </Draw>
        </IconButton>
      </div>
    </div>
  );
}

function Board() {
  return (
    <main className="relative flex flex-1 flex-col overflow-hidden bg-[#f2f2f2]">
      <BoardDrawing />
      {blueNotes.map((b) => (
        <div key={b} className={`absolute top-0 h-3 w-[43px] bg-[#abd0f6] shadow-[1px_3px_3px_rgba(0,0,0,0.4)] ${b}`} />
      ))}
      {notes.map((n) => (
        <Note key={n.place} {...n} />
      ))}
      <div className="absolute top-[258px] left-[466px] flex h-10 items-center rounded-[20px] bg-[#ffd02f] px-4 text-[25px] whitespace-nowrap text-[#050038]">
        Visiting Artisan
      </div>

      <div className="relative flex flex-1 flex-col p-4">
        <div className="flex items-start gap-4">
          <TitlePanel />
          <div className="ml-auto">
            <PresentPanel />
          </div>
          <PeoplePanel />
        </div>
        <div className="flex flex-1 items-center pb-[18px]">
          <SideTools />
        </div>
        <BottomRow />
      </div>

      <div className="absolute right-4 bottom-[2px] left-[201px] h-3 rounded-full bg-[#a8a8a8]" />
      <div className="absolute right-[2px] bottom-4 h-[696px] w-3 rounded-full bg-[#a5a5a5]" />
    </main>
  );
}

export default function App() {
  return (
    <div className="flex min-h-screen flex-col bg-[#333333] font-[Inter,'Noto_Sans_CJK_JP',sans-serif] text-[#1c1c1c]">
      <MenuBar />
      <div className="flex flex-1 flex-col overflow-hidden rounded-[20px]">
        <TabStrip />
        <div className="border-b-2 border-[#5ed3e4] bg-[#ffd258] pb-2">
          <Toolbar />
          <BookmarkBar />
        </div>
        <Board />
      </div>
    </div>
  );
}
